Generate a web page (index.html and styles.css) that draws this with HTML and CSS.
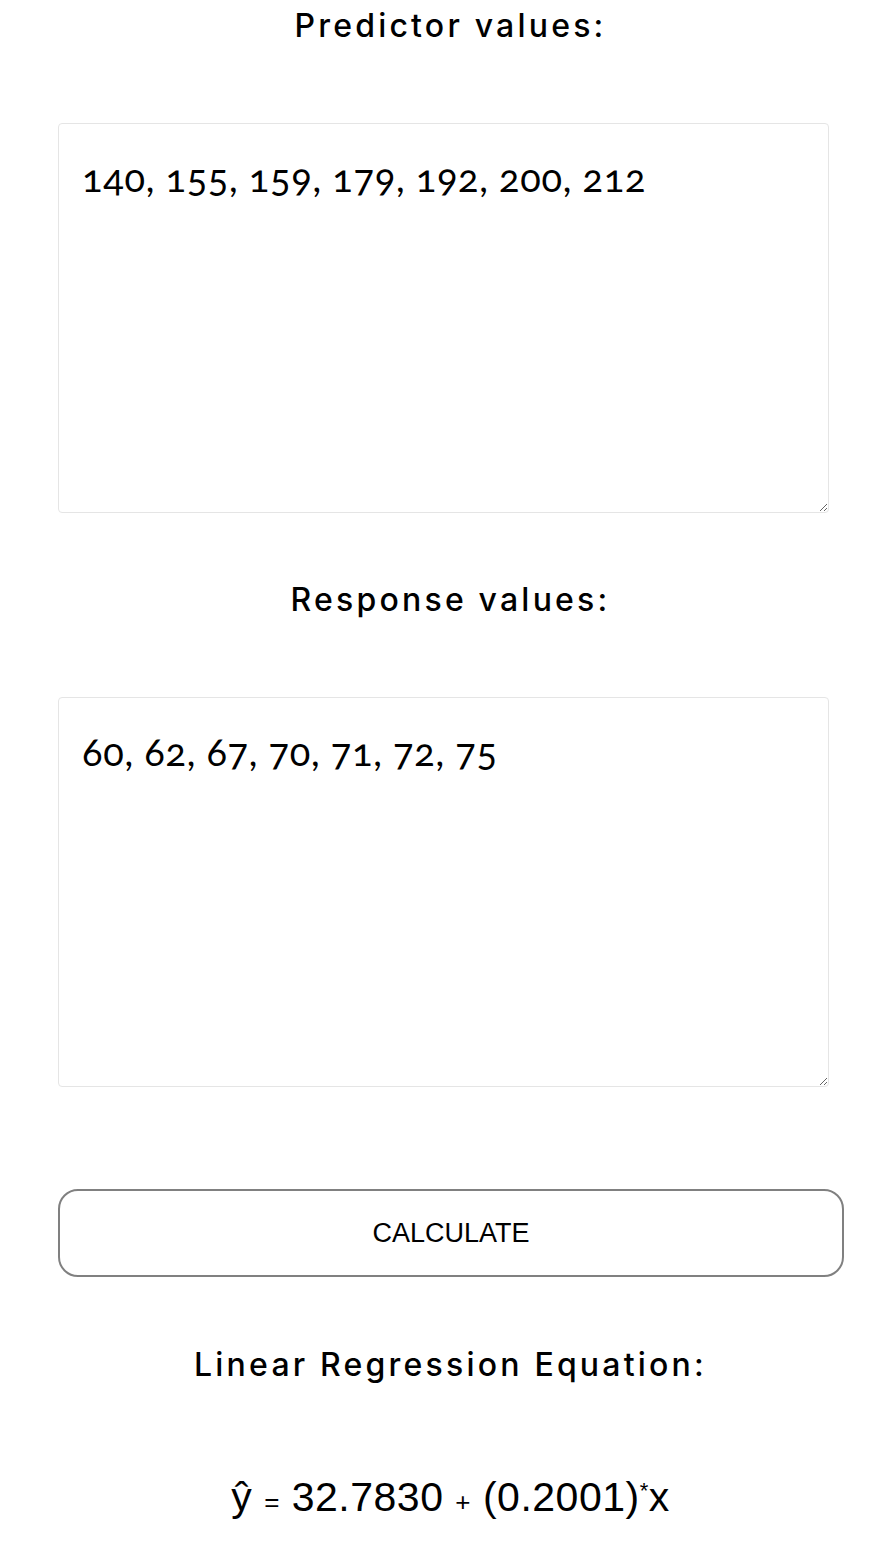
FILE: index.html
```html
<!DOCTYPE html>
<html lang="en">
<head>
  <meta charset="UTF-8" />
  <meta name="viewport" content="width=device-width, initial-scale=1.0"/>
  <title>Linear Regression Calculator</title>
  <link rel="stylesheet" href="styles.css">
</head>
<body>

  <main class="calculator">
    <h2 class="first">Predictor values:</h2>
    <textarea id="predictor">140, 155, 159, 179, 192, 200, 212</textarea>

    <h2>Response values:</h2>
    <textarea id="response">60, 62, 67, 70, 71, 72, 75</textarea>

    <button id="calcBtn">CALCULATE</button>

    <h2 class="result">Linear Regression Equation:</h2>
    <p class="equation">ŷ <span class="op">=</span> 32.7830 <span class="op">+</span> (0.2001)<sup>*</sup>x</p>
  </main>

</body>
</html>
```

FILE: styles.css
```css
body {
  margin: 0;
  background: #fff;
  color: #000;
  font-family: Inter, Lato, sans-serif;
}

.calculator {
  width: 785px;
  margin-left: 58px;
  text-align: center;
}

h2 {
  font-size: 32px;
  font-weight: 500;
  line-height: 40px;
  letter-spacing: 3.2px;
  margin: 67px 0 77px;
}

h2.first {
  margin-top: 6px;
}

h2.result {
  margin-top: 68px;
}

textarea {
  display: block;
  box-sizing: border-box;
  width: 771px;
  height: 390px;
  padding: 30px 23px;
  border: 1px solid #e5e5e5;
  border-radius: 4px;
  font-family: Lato, "Open Sans", sans-serif;
  font-size: 38px;
  letter-spacing: 0.7px;
  font-variant-numeric: oldstyle-nums;
  color: #000;
  resize: vertical;
  outline: none;
}

button {
  display: block;
  box-sizing: border-box;
  width: 786px;
  height: 88px;
  margin-top: 102px;
  background: #fff;
  border: 2px solid #808080;
  border-radius: 20px;
  font-family: "Liberation Sans", Arial, sans-serif;
  font-size: 27px;
  color: #000;
  cursor: pointer;
}

.equation {
  font-family: "Liberation Sans", Arial, sans-serif;
  font-size: 41px;
  line-height: 48px;
  letter-spacing: 0.5px;
  margin: 88px 0 0;
}

.equation .op {
  font-size: 26px;
}

.equation sup {
  font-size: 22px;
  line-height: 0;
  vertical-align: 13px;
}
```
